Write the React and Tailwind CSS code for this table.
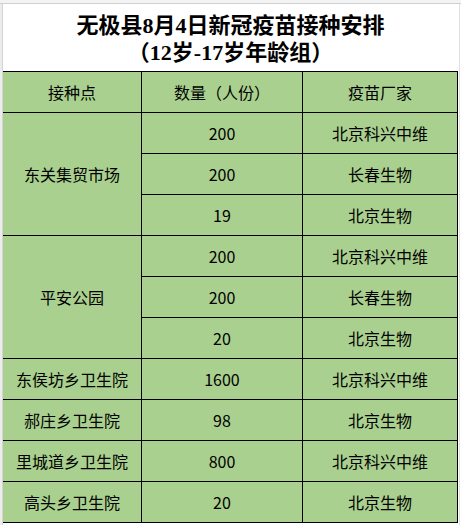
import React from 'react';

const rows = [
  { site: '东关集贸市场', span: 3, items: [['200', '北京科兴中维'], ['200', '长春生物'], ['19', '北京生物']] },
  { site: '平安公园', span: 3, items: [['200', '北京科兴中维'], ['200', '长春生物'], ['20', '北京生物']] },
  { site: '东侯坊乡卫生院', span: 1, items: [['1600', '北京科兴中维']] },
  { site: '郝庄乡卫生院', span: 1, items: [['98', '北京生物']] },
  { site: '里城道乡卫生院', span: 1, items: [['800', '北京科兴中维']] },
  { site: '高头乡卫生院', span: 1, items: [['20', '北京生物']] },
];

const cell = 'bg-[#a9d08e] flex items-center justify-center text-[16px] text-black';

const App = () => {
  const cells = [];
  let r = 2;
  rows.forEach((g, gi) => {
    cells.push(
      <div
        key={`s${gi}`}
        className={cell}
        style={{ gridColumn: 1, gridRow: `${r} / span ${g.span}` }}
      >
        {g.site}
      </div>
    );
    g.items.forEach(([n, maker], ii) => {
      cells.push(
        <div key={`n${gi}-${ii}`} className={cell} style={{ gridColumn: 2, gridRow: r + ii }}>
          {n}
        </div>
      );
      cells.push(
        <div key={`m${gi}-${ii}`} className={cell} style={{ gridColumn: 3, gridRow: r + ii }}>
          {maker}
        </div>
      );
    });
    r += g.span;
  });

  return (
    <div
      className="w-[461px] h-[525px] bg-white overflow-hidden flex flex-col"
      style={{ fontFamily: '"Noto Sans CJK SC", "Noto Sans", sans-serif' }}
    >
      <div className="h-[4px] bg-[#f3f3f3] border-b border-[#d0d0d0] shrink-0" />
      <div className="flex flex-1">
        <div className="w-[3px] bg-[#ececec] border-r border-[#d4d4d4] shrink-0" />
        <div className="flex flex-col w-[455px]">
          <div
            className="h-[67px] flex flex-col items-center text-[22px] font-bold leading-[27px] text-black"
            style={{ fontFamily: '"Liberation Serif", "Noto Sans CJK SC", serif' }}
          >
            <div className="mt-[8px]">无极县8月4日新冠疫苗接种安排</div>
            <div>（12岁-17岁年龄组）</div>
          </div>
          <div className="grid grid-cols-[138px_160px_154px] auto-rows-[40px] gap-px bg-black border-t border-r border-b border-black">
            <div className={cell}>接种点</div>
            <div className={cell}>数量（人份）</div>
            <div className={cell}>疫苗厂家</div>
            {cells}
          </div>
        </div>
        <div className="w-[1px] ml-[1px] bg-[#e0e0e0]" />
      </div>
    </div>
  );
};

export default App;
